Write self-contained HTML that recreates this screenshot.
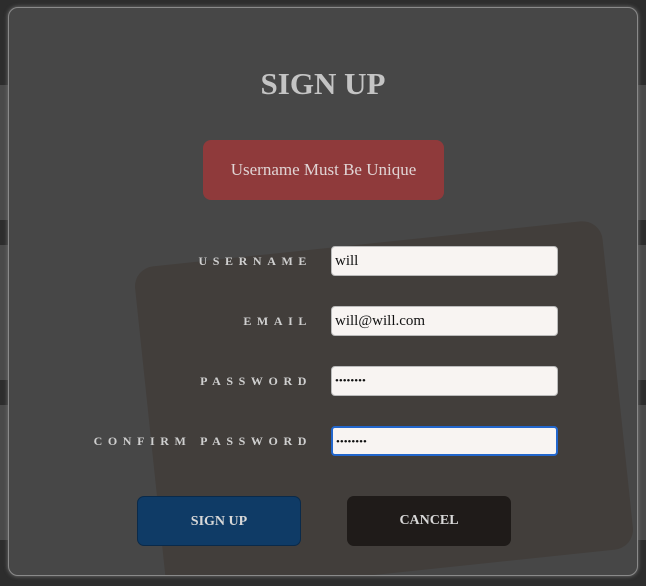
<!DOCTYPE html>
<html><head><style>
html,body{margin:0;width:646px;height:586px;overflow:hidden;background:#3a3a3a;font-family:"Liberation Serif",serif}
.bg{position:absolute;left:0;width:646px}
.modal{position:absolute;left:8px;top:7px;width:630px;height:569px;box-sizing:border-box;border:1px solid #8a8a8a;border-radius:10px;background:#474747;overflow:hidden;box-shadow:0 0 4px #777}
.book{position:absolute;left:140px;top:235px;width:470px;height:330px;background:#423e3b;transform:rotate(-6deg);border-radius:20px}
h1{position:absolute;top:58px;left:0;width:628px;text-align:center;margin:0;color:#c4c4c4;font-size:31px;font-weight:bold}
.err{position:absolute;left:194px;top:132px;width:241px;height:60px;background:#8f3a3b;border-radius:8px;color:#e0d4d4;font-size:17px;text-align:center;line-height:60px}
.lbl{position:absolute;right:325px;color:#cfcfcf;font-size:12px;letter-spacing:5.6px;font-weight:bold}
.in{position:absolute;left:322px;width:227px;height:30px;background:#f8f4f2;border:1px solid #bbb;border-radius:4px;font-size:15px;color:#111;line-height:28px;padding-left:3px;box-sizing:border-box}
.btn{position:absolute;top:488px;width:164px;height:50px;box-sizing:border-box;border-radius:7px;color:#d8d8d8;font-weight:bold;font-size:14px;text-align:center;line-height:50px}
</style></head><body>
<div class="bg" style="top:0;height:85px;background:#2d2d2d"></div>
<div class="bg" style="top:85px;height:135px;background:#4a4a4a"></div>
<div class="bg" style="top:220px;height:25px;background:#2d2d2d"></div>
<div class="bg" style="top:245px;height:135px;background:#4a4a4a"></div>
<div class="bg" style="top:380px;height:25px;background:#2d2d2d"></div>
<div class="bg" style="top:405px;height:135px;background:#4a4a4a"></div>
<div class="bg" style="top:540px;height:46px;background:#2d2d2d"></div>
<div class="modal">
<div class="book"></div>
<h1>SIGN UP</h1>
<div class="err">Username Must Be Unique</div>
<div class="lbl" style="top:246px">USERNAME</div>
<div class="in" style="top:238px">will</div>
<div class="lbl" style="top:306px">EMAIL</div>
<div class="in" style="top:298px">will@will.com</div>
<div class="lbl" style="top:366px">PASSWORD</div>
<div class="in" style="top:358px;font-size:11px">••••••••</div>
<div class="lbl" style="top:426px">CONFIRM PASSWORD</div>
<div class="in" style="top:418px;font-size:11px;border:2px solid #2266cc">••••••••</div>
<div class="btn" style="left:128px;background:#0f3b66;border:1px solid #0a2a4a">SIGN UP</div>
<div class="btn" style="left:338px;background:#1f1b19">CANCEL</div>
</div>
</body></html>
